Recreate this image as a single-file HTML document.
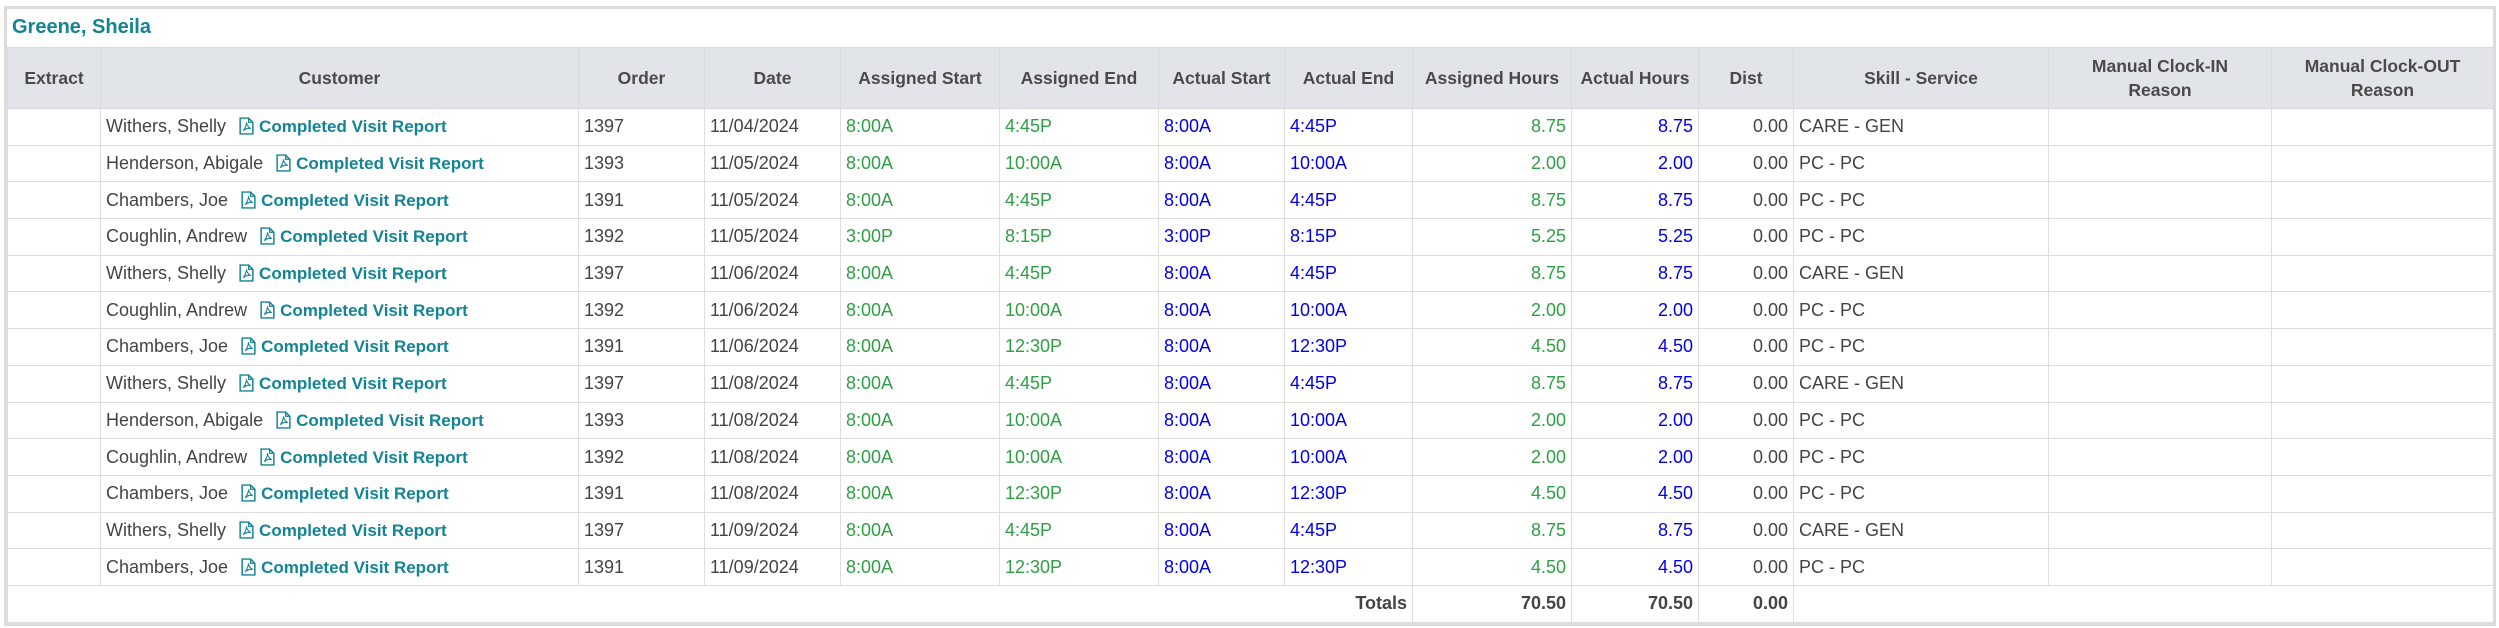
<!DOCTYPE html>
<html><head><meta charset="utf-8"><style>
html,body{margin:0;padding:0;background:#fff;width:2499px;height:628px;overflow:hidden}
body{font-family:"Liberation Sans",sans-serif;color:#444}
.frame{position:absolute;left:4px;top:6px;width:2486px;height:614px;border:3px solid #dcdcdc;border-right-width:3px}
.title{position:absolute;left:12px;top:16px;font-size:20px;font-weight:bold;color:#138496}
table{position:absolute;left:7px;top:47px;border-collapse:collapse;table-layout:fixed;font-size:18px}
th{background:#e1e5e9;font-weight:bold;color:#4a4a4a;height:60px;border:1px solid #d8dbde;text-align:center;font-size:17.5px;line-height:24px;padding:0 4px}
td{height:35.7px;border:1px solid #dedede;padding:0 5px;white-space:nowrap;color:#444}
.g{color:#2ea043}.b{color:#0000ee}.r{text-align:right}
.l{color:#138496;font-weight:bold;font-size:17px}
svg{vertical-align:-3px;margin:0 5px 0 13px}
.t td{font-weight:bold;border-top:1px solid #dedede}
</style></head><body>
<div class="frame"></div>
<div class="title">Greene, Sheila</div>
<table>
<colgroup><col style="width:93px"><col style="width:478px"><col style="width:126px"><col style="width:136px"><col style="width:159px"><col style="width:159px"><col style="width:126px"><col style="width:128px"><col style="width:159px"><col style="width:127px"><col style="width:95px"><col style="width:255px"><col style="width:223px"><col style="width:222px"></colgroup>
<tr><th>Extract</th><th>Customer</th><th>Order</th><th>Date</th><th>Assigned Start</th><th>Assigned End</th><th>Actual Start</th><th>Actual End</th><th>Assigned Hours</th><th>Actual Hours</th><th>Dist</th><th>Skill - Service</th><th>Manual Clock-IN<br>Reason</th><th>Manual Clock-OUT<br>Reason</th></tr>
<tbody id="tb">
</tbody>
</table>
<script>
var I='<svg width="15" height="18" viewBox="0 0 14 17"><path d="M1 1h8l4 4v11H1z" fill="none" stroke="#138496" stroke-width="1.4"/><path d="M9 1v4h4" fill="none" stroke="#138496" stroke-width="1.2"/><path d="M4 13c2-3 3-6 3-8 0 2 1 4 4 6-3-1-5 0-7 2z" fill="none" stroke="#138496" stroke-width="1"/></svg>';
var d=[["Withers, Shelly",1397,"11/04/2024","8:00A","4:45P","8.75","CARE - GEN"],
["Henderson, Abigale",1393,"11/05/2024","8:00A","10:00A","2.00","PC - PC"],
["Chambers, Joe",1391,"11/05/2024","8:00A","4:45P","8.75","PC - PC"],
["Coughlin, Andrew",1392,"11/05/2024","3:00P","8:15P","5.25","PC - PC"],
["Withers, Shelly",1397,"11/06/2024","8:00A","4:45P","8.75","CARE - GEN"],
["Coughlin, Andrew",1392,"11/06/2024","8:00A","10:00A","2.00","PC - PC"],
["Chambers, Joe",1391,"11/06/2024","8:00A","12:30P","4.50","PC - PC"],
["Withers, Shelly",1397,"11/08/2024","8:00A","4:45P","8.75","CARE - GEN"],
["Henderson, Abigale",1393,"11/08/2024","8:00A","10:00A","2.00","PC - PC"],
["Coughlin, Andrew",1392,"11/08/2024","8:00A","10:00A","2.00","PC - PC"],
["Chambers, Joe",1391,"11/08/2024","8:00A","12:30P","4.50","PC - PC"],
["Withers, Shelly",1397,"11/09/2024","8:00A","4:45P","8.75","CARE - GEN"],
["Chambers, Joe",1391,"11/09/2024","8:00A","12:30P","4.50","PC - PC"]];
var h='';d.forEach(function(r){h+='<tr><td></td><td>'+r[0]+I+'<span class="l">Completed Visit Report</span></td><td>'+r[1]+'</td><td>'+r[2]+'</td><td class="g">'+r[3]+'</td><td class="g">'+r[4]+'</td><td class="b">'+r[3]+'</td><td class="b">'+r[4]+'</td><td class="g r">'+r[5]+'</td><td class="b r">'+r[5]+'</td><td class="r">0.00</td><td>'+r[6]+'</td><td></td><td></td></tr>';});
h+='<tr class="t"><td colspan="8" class="r">Totals</td><td class="r">70.50</td><td class="r">70.50</td><td class="r">0.00</td><td colspan="3"></td></tr>';
document.getElementById('tb').innerHTML=h;
</script>
</body></html>
